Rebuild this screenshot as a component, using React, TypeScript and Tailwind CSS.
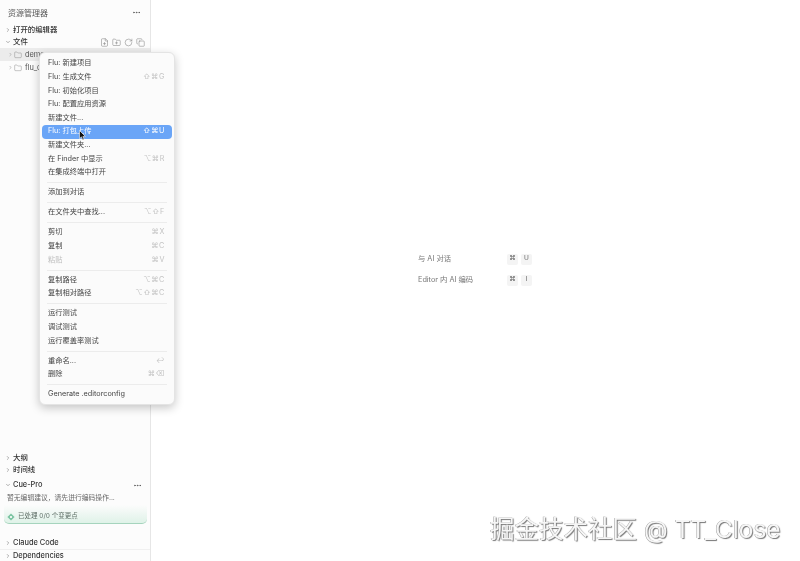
import { ChevronDown, ChevronRight, Copy, Ellipsis, FilePlus, Folder, FolderPlus, RotateCw } from "lucide-react";

type MenuItem = { label: string; keys?: string; active?: boolean; disabled?: boolean };

const menuGroups: MenuItem[][] = [
  [
    { label: "Flu: 新建项目" },
    { label: "Flu: 生成文件", keys: "⇧⌘G" },
    { label: "Flu: 初始化项目" },
    { label: "Flu: 配置应用资源" },
    { label: "新建文件..." },
    { label: "Flu: 打包上传", keys: "⇧⌘U", active: true },
    { label: "新建文件夹..." },
    { label: "在 Finder 中显示", keys: "⌥⌘R" },
    { label: "在集成终端中打开" },
  ],
  [{ label: "添加到对话" }],
  [{ label: "在文件夹中查找...", keys: "⌥⇧F" }],
  [
    { label: "剪切", keys: "⌘X" },
    { label: "复制", keys: "⌘C" },
    { label: "粘贴", keys: "⌘V", disabled: true },
  ],
  [
    { label: "复制路径", keys: "⌥⌘C" },
    { label: "复制相对路径", keys: "⌥⇧⌘C" },
  ],
  [{ label: "运行测试" }, { label: "调试测试" }, { label: "运行覆盖率测试" }],
  [
    { label: "重命名...", keys: "↩" },
    { label: "删除", keys: "⌘⌫" },
  ],
  [{ label: "Generate .editorconfig" }],
];

function SectionRow({ label, open }: { label: string; open?: boolean }) {
  const Icon = open ? ChevronDown : ChevronRight;
  return (
    <div className="flex h-3 items-center gap-[2px] pl-[5px] text-[7.4px] font-medium text-[#333333]">
      <Icon size={6} strokeWidth={2} className="text-[#666666]" />
      <span>{label}</span>
    </div>
  );
}

function TreeRow({ label, selected }: { label: string; selected?: boolean }) {
  return (
    <div className={`flex h-[13px] items-center gap-[1px] pl-[8px] text-[7.4px] text-[#555555] ${selected ? "bg-[#ececec]" : ""}`}>
      <ChevronRight size={5} strokeWidth={2} className="text-[#777777]" />
      <Folder size={8} strokeWidth={1.2} className="text-[#777777]" />
      <span className="ml-[2px]">{label}</span>
    </div>
  );
}

function ContextMenu() {
  return (
    <div className="absolute left-[39px] top-[52px] w-[136px] rounded-[6px] border border-[#e4e4e4] bg-[#fbfbfb] px-[2px] pt-[4px] pb-[2px] shadow-[0_3px_10px_rgba(0,0,0,0.22)]">
      {menuGroups.map((group, i) => (
        <div key={i}>
          {i > 0 && (
            <div className="flex h-[6.5px] items-center px-[5px]">
              <div className="h-px w-full bg-[#ececec]" />
            </div>
          )}
          {group.map((item) => (
            <div
              key={item.label}
              className={`flex h-[13.6px] items-center justify-between rounded-[4px] pl-[6px] pr-[7px] text-[7.25px] ${
                item.active ? "bg-[#6aa5f7] text-white" : item.disabled ? "text-[#bdbdbd]" : "text-[#444444]"
              }`}
            >
              <span>{item.label}</span>
              {item.keys && (
                <span className={`tracking-[0.6px] ${item.active ? "text-white" : "text-[#c4c4c4]"}`}>{item.keys}</span>
              )}
            </div>
          ))}
        </div>
      ))}
    </div>
  );
}

function Hint({ label, keys }: { label: string; keys: string[] }) {
  return (
    <div className="flex h-[21px] items-center justify-between text-[7.3px] text-[#777777]">
      <span>{label}</span>
      <div className="flex gap-[3px]">
        {keys.map((k) => (
          <span key={k} className="flex h-[11px] w-[11px] items-center justify-center rounded-[2px] bg-[#f4f4f4] text-[6.5px] text-[#666666]">
            {k}
          </span>
        ))}
      </div>
    </div>
  );
}

export default function App() {
  return (
    <div className="relative flex h-[561px] w-[800px] overflow-hidden bg-white font-['Inter','Noto_Sans_CJK_SC',sans-serif] blur-[0.3px]">
      {/* Sidebar */}
      <aside className="flex h-full w-[151px] shrink-0 flex-col border-r border-[#e6e6e6] bg-[#fcfcfc]">
        <div className="flex h-6 items-center justify-between pl-2 pr-[9px] pt-px text-[8px] text-[#555555]">
          <span>资源管理器</span>
          <Ellipsis size={9} className="text-[#555555]" />
        </div>
        <SectionRow label="打开的编辑器" />
        <div className="flex items-center justify-between pr-[5px]">
          <SectionRow label="文件" open />
          <div className="flex gap-[3px] text-[#777777]">
            <FilePlus size={9} strokeWidth={1.3} />
            <FolderPlus size={9} strokeWidth={1.3} />
            <RotateCw size={9} strokeWidth={1.3} />
            <Copy size={9} strokeWidth={1.3} />
          </div>
        </div>
        <TreeRow label="demo" selected />
        <TreeRow label="flu_demo" />

        <div className="mt-auto">
          <SectionRow label="大纲" />
          <SectionRow label="时间线" />
          <div className="mt-[3px] flex items-center justify-between pr-[8px]">
            <SectionRow label="Cue-Pro" open />
            <Ellipsis size={9} className="text-[#555555]" />
          </div>
          <div className="pl-[7px] pt-[1px] text-[6.8px] leading-[12px] text-[#666666]">暂无编辑建议，请先进行编码操作...</div>
          <div className="ml-[4px] mr-[3px] mt-[1px] flex h-[19px] items-center gap-[3px] rounded-b-[5px] border-b border-[#a5d4bd] bg-gradient-to-b from-[#fcfcfc] to-[#dff2e8] pl-[3px] pt-[5px] text-[6.5px] text-[#5f6f67]">
            <svg width="8" height="8" viewBox="0 0 10 10">
              <path d="M5 .5 9.5 5 5 9.5 .5 5Z" fill="#7cc4a2" />
              <circle cx="5" cy="5" r="1.4" fill="#fff" />
            </svg>
            <span>已处理 0/0 个变更点</span>
          </div>
          <div className="mt-[13px] h-[13px] border-b border-[#f0f0f0]">
            <SectionRow label="Claude Code" />
          </div>
          <div className="h-[11px]">
            <SectionRow label="Dependencies" />
          </div>
        </div>
      </aside>

      {/* Editor empty state */}
      <main className="flex flex-1 items-center justify-center pb-[22px]">
        <div className="ml-[-1px] w-[114px]">
          <Hint label="与 AI 对话" keys={["⌘", "U"]} />
          <Hint label="Editor 内 AI 编码" keys={["⌘", "I"]} />
        </div>
      </main>

      <ContextMenu />

      {/* Cursor */}
      <svg className="absolute left-[79px] top-[130px]" width="7" height="11" viewBox="0 0 7 11">
        <path d="M.5.5v8l2-1.6 1.2 3 1.4-.6-1.2-2.9H6.4Z" fill="#111" stroke="#fff" strokeWidth=".6" />
      </svg>

      {/* Watermark */}
      <div className="absolute left-[490px] top-[512px] text-[24.5px] leading-[35px] text-[#f6f6f6] [text-shadow:1px_1px_1px_#777,-0.5px_-0.5px_0.5px_#999]">
        掘金技术社区 @ TT_Close
      </div>
    </div>
  );
}
